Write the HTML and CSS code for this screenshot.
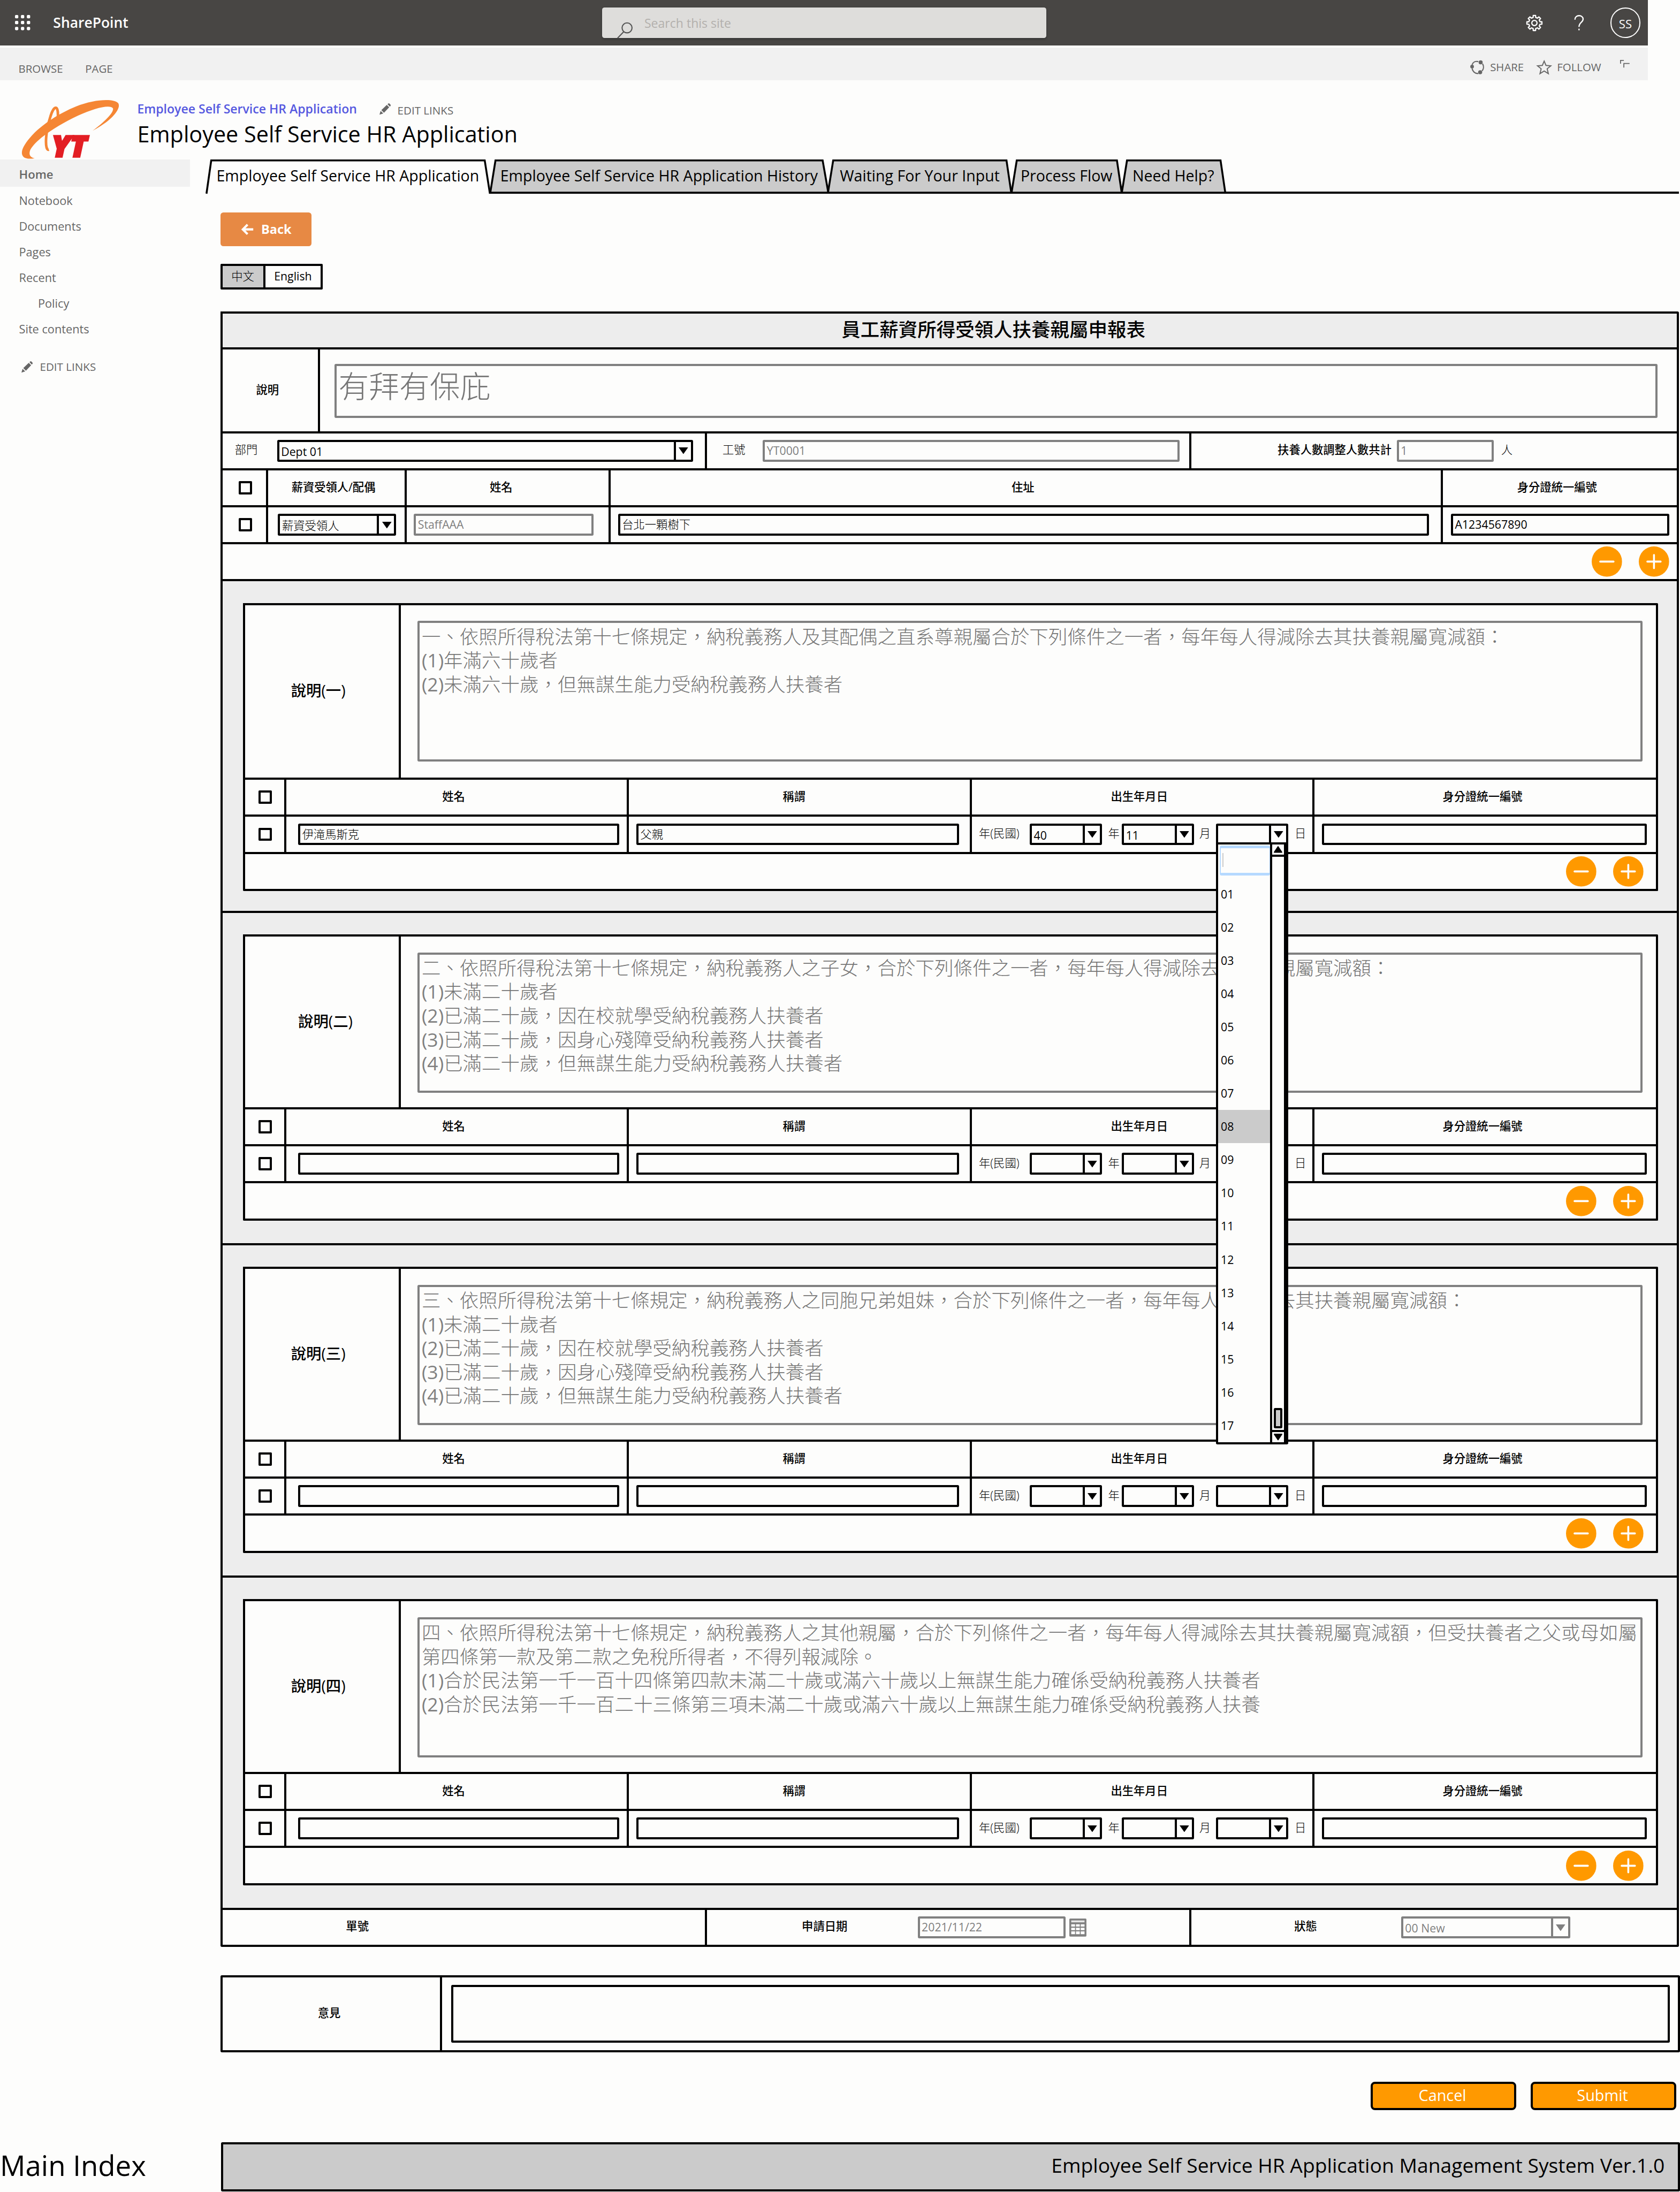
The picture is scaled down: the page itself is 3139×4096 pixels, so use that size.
FILE: index.html
```html
<!DOCTYPE html>
<html lang="zh-Hant">
<head>
<meta charset="utf-8">
<title>Employee Self Service HR Application</title>
<link rel="stylesheet" href="styles.css">
</head>
<body>
<svg class="defs" width="0" height="0">
  <defs>
    <symbol id="pencil" viewBox="0 0 24 24"><path d="M0 24 L2.5 16 L8 21.5Z M4 14.5 L15.5 3.5 L20.5 8.5 L9.5 20Z M17 2 L19 0.3 Q20 -0.2 21 0.6 L23.4 3 Q24.2 4 23.5 5 L22 7Z" fill="#666"/></symbol>
    <symbol id="down" viewBox="0 0 20 14"><path d="M0 0H20L10 14Z" fill="currentColor"/></symbol>
    <symbol id="minus" viewBox="0 0 64 64"><circle cx="32" cy="32" r="32" fill="#ff9900"/><path d="M18 32H46" stroke="#fff" stroke-width="4" stroke-linecap="round"/></symbol>
    <symbol id="plus" viewBox="0 0 64 64"><circle cx="32" cy="32" r="32" fill="#ff9900"/><path d="M18 32H46M32 18V46" stroke="#fff" stroke-width="4" stroke-linecap="round"/></symbol>
  </defs>
</svg>
<div class="page">
  <header class="topbar">
    <svg class="waffle" viewBox="0 0 32 32" fill="#fff"><rect x="0" y="0" width="7" height="7" rx="2"/><rect x="12.5" y="0" width="7" height="7" rx="2"/><rect x="25" y="0" width="7" height="7" rx="2"/><rect x="0" y="12.5" width="7" height="7" rx="2"/><rect x="12.5" y="12.5" width="7" height="7" rx="2"/><rect x="25" y="12.5" width="7" height="7" rx="2"/><rect x="0" y="25" width="7" height="7" rx="2"/><rect x="12.5" y="25" width="7" height="7" rx="2"/><rect x="25" y="25" width="7" height="7" rx="2"/></svg>
    <span class="brand">SharePoint</span>
    <div class="search">
      <svg class="lens" viewBox="0 0 34 34" fill="none" stroke="#555" stroke-width="2.4"><circle cx="21" cy="12.500" r="10.500"/><path d="M14 20.500 L1 34"/></svg>
      <span>Search this site</span>
    </div>
    <svg class="gear" viewBox="-18 -18 36 36" fill="none" stroke="#fff" stroke-width="2.6" stroke-linejoin="round"><path d="M15.800 -2.500L15.800 2.500L11.700 2.700L10.200 6.400L12.900 9.400L9.400 12.900L6.400 10.200L2.700 11.700L2.500 15.800L-2.500 15.800L-2.700 11.700L-6.400 10.200L-9.400 12.900L-12.900 9.400L-10.200 6.400L-11.700 2.700L-15.800 2.500L-15.800 -2.500L-11.700 -2.700L-10.200 -6.400L-12.900 -9.400L-9.400 -12.900L-6.400 -10.200L-2.700 -11.700L-2.500 -15.800L2.500 -15.800L2.700 -11.700L6.400 -10.200L9.400 -12.900L12.900 -9.400L10.200 -6.400L11.700 -2.700Z"/><circle r="5.500"/></svg>
    <svg class="help" viewBox="0 0 22 34" fill="none" stroke="#fff" stroke-width="2.800"><path d="M2 10 C2 -1.500 20 -1.500 20 9 C20 16 11 16 11 26"/><path d="M11 30V33.500"/></svg>
    <span class="avatar">SS</span>
  </header>
  <div class="ribbon">
    <span>BROWSE</span><span class="second">PAGE</span>
    <div class="actions">
      <svg class="share" viewBox="0 0 31 31" fill="none" stroke="#666" stroke-width="2.500"><path d="M4 10 C6 5 11 2 17 3.500"/><path d="M26 8 C29 13 28.500 19 25 23"/><path d="M17 28.500 C10 29 5 24 4 18"/><circle cx="4" cy="14" r="2.600" fill="#666"/><circle cx="22" cy="5" r="3" fill="#666"/><circle cx="21" cy="26" r="3" fill="#666"/></svg>
      <span class="act">SHARE</span>
      <svg class="star" viewBox="0 0 32 31" fill="none" stroke="#666" stroke-width="2.200"><path d="M16 2.500 L19.800 11.500 L30 12.300 L22.300 18.700 L24.800 28.800 L16 23.300 L7.200 28.800 L9.700 18.700 L2 12.300 L12.200 11.500Z"/></svg>
      <span class="act">FOLLOW</span>
      <svg class="focus" viewBox="0 0 20 17" fill="none" stroke="#666" stroke-width="2"><path d="M1 8V1H8"/><path d="M8 16V7.500H20"/></svg>
    </div>
  </div>
  <div class="site-head">
    <svg class="logo" viewBox="44 206 210 130">
      <path d="M73 333C46 338 40 324 52 305C72 272 118 241 160 224C200 208 240 207 249 217C256 228 236 254 195 275C222 255 240 236 238 228C232 219 200 227 165 243C120 264 76 293 64 315C60 325 63 331 73 333Z" fill="#f58634"/>
      <path d="M103 315C94 318 95 280 106 246C113 222 123 219 122 245C121 252 119 258 115 264" fill="none" stroke="#f58634" stroke-width="5.500"/>
      <text x="109" y="330" font-family="Open Sans, sans-serif" font-weight="800" font-style="italic" font-size="62" textLength="74" lengthAdjust="spacingAndGlyphs" fill="#e31e24" stroke="#e31e24" stroke-width="4">YT</text>
    </svg>
    <div class="titles">
      <div class="crumb"><span class="link">Employee Self Service HR Application</span><svg class="pen"><use href="#pencil"/></svg><span class="edit">EDIT LINKS</span></div>
      <h1>Employee Self Service HR Application</h1>
    </div>
  </div>
  <div class="main">
    <nav>
      <span class="home">Home</span>
      <span>Notebook</span>
      <span>Documents</span>
      <span>Pages</span>
      <span>Recent</span>
      <span class="sub">Policy</span>
      <span>Site contents</span>
      <span class="nav-edit"><svg class="pen"><use href="#pencil"/></svg>EDIT LINKS</span>
    </nav>
    <div class="content">
      <div class="tabs">
        <div class="tab t1"><svg viewBox="0 0 599 72"><path d="M2 72L12 2H588L599 72" fill="none"/></svg>Employee Self Service HR Application</div>
        <div class="tab t2"><svg viewBox="0 0 712 72"><path d="M0 70L11 2H700L712 70Z"/></svg>Employee Self Service HR Application History</div>
        <div class="tab t3"><svg viewBox="0 0 386 72"><path d="M0 70L11 2H376L386 70Z"/></svg>Waiting For Your Input</div>
        <div class="tab t4"><svg viewBox="0 0 232 72"><path d="M0 70L11 2H222L232 70Z"/></svg>Process Flow</div>
        <div class="tab t5"><svg viewBox="0 0 218 72"><path d="M0 70L11 2H208L218 70Z"/></svg>Need Help?</div>
        <div class="tab-rest"></div>
      </div>
      <div class="body">
        <div class="back"><svg viewBox="0 0 26 24" fill="none" stroke="#fff" stroke-width="4.600"><path d="M25 12H4M13 2L3 12L13 22"/></svg>Back</div>
        <div class="lang"><span class="on">中文</span><span>English</span></div>

        <div class="sheet">
          <div class="row title-row"><div class="cell title">員工薪資所得受領人扶養親屬申報表</div></div>
          <div class="row intro">
            <div class="cell th">說明</div>
            <div class="cell"><div class="area big">有拜有保庇</div></div>
          </div>
          <div class="row staff">
            <div class="cell"><span class="lb">部門</span><div class="select dept"><span>Dept 01</span><i><svg><use href="#down"/></svg></i></div></div>
            <div class="cell"><span class="lb">工號</span><div class="input off empno">YT0001</div></div>
            <div class="cell"><span class="lb strong">扶養人數調整人數共計</span><div class="input off count">1</div><span class="lb">人</span></div>
          </div>
          <div class="row who">
            <div class="cell ck"><b></b></div><div class="cell th">薪資受領人/配偶</div><div class="cell th name">姓名</div><div class="cell th">住址</div><div class="cell th">身分證統一編號</div>
          </div>
          <div class="row who">
            <div class="cell ck"><b></b></div>
            <div class="cell"><div class="select role"><span>薪資受領人</span><i><svg><use href="#down"/></svg></i></div></div>
            <div class="cell"><div class="input off staffname">StaffAAA</div></div>
            <div class="cell"><div class="input addr">台北一顆樹下</div></div>
            <div class="cell"><div class="input pid">A1234567890</div></div>
          </div>
          <div class="row add"><div class="cell"><svg><use href="#minus"/></svg><svg><use href="#plus"/></svg></div></div>

          <section class="first">
            <div class="box">
              <div class="row note"><div class="cell th">說明(一)</div><div class="cell"><div class="area">一、依照所得稅法第十七條規定，納稅義務人及其配偶之直系尊親屬合於下列條件之一者，每年每人得減除去其扶養親屬寬減額：<br><em>(1)</em>年滿六十歲者<br><em>(2)</em>未滿六十歲，但無謀生能力受納稅義務人扶養者</div></div></div>
              <div class="row kin"><div class="cell ck"><b></b></div><div class="cell th">姓名</div><div class="cell th rel">稱謂</div><div class="cell th">出生年月日</div><div class="cell th">身分證統一編號</div></div>
              <div class="row kin">
                <div class="cell ck"><b></b></div>
                <div class="cell"><div class="input kname">伊滝馬斯克</div></div>
                <div class="cell"><div class="input krel">父親</div></div>
                <div class="cell dob"><span class="y">年(民國)</span><div class="select"><span>40</span><i><svg><use href="#down"/></svg></i></div><span class="m">年</span><div class="select"><span>11</span><i><svg><use href="#down"/></svg></i></div><span class="d">月</span>
                  <div class="select open"><span></span><i><svg><use href="#down"/></svg></i>
                    <div class="menu">
                      <div class="options">
                        <div class="filter"></div>
                        <span>01</span><span>02</span><span>03</span><span>04</span><span>05</span><span>06</span><span>07</span><span class="hot">08</span><span>09</span><span>10</span><span>11</span><span>12</span><span>13</span><span>14</span><span>15</span><span>16</span><span>17</span>
                      </div>
                      <div class="scroll">
                        <div class="sb up"><svg viewBox="0 0 18 14"><path d="M9 1L17 13H1Z" stroke="#000" stroke-width="2" stroke-linejoin="round"/></svg></div>
                        <div class="thumb"></div>
                        <div class="sb dn"><svg viewBox="0 0 18 14"><path d="M1 1H17L9 13Z" stroke="#000" stroke-width="2" stroke-linejoin="round"/></svg></div>
                      </div>
                    </div>
                  </div><span class="e">日</span></div>
                <div class="cell"><div class="input kid"></div></div>
              </div>
              <div class="row add"><div class="cell"><svg><use href="#minus"/></svg><svg><use href="#plus"/></svg></div></div>
            </div>
          </section>

          <section>
            <div class="box">
              <div class="row note"><div class="cell th nudge">說明(二)</div><div class="cell"><div class="area">二、依照所得稅法第十七條規定，納稅義務人之子女，合於下列條件之一者，每年每人得減除去其扶養親屬寬減額：<br><em>(1)</em>未滿二十歲者<br><em>(2)</em>已滿二十歲，因在校就學受納稅義務人扶養者<br><em>(3)</em>已滿二十歲，因身心殘障受納稅義務人扶養者<br><em>(4)</em>已滿二十歲，但無謀生能力受納稅義務人扶養者</div></div></div>
              <div class="row kin"><div class="cell ck"><b></b></div><div class="cell th">姓名</div><div class="cell th rel">稱謂</div><div class="cell th">出生年月日</div><div class="cell th">身分證統一編號</div></div>
              <div class="row kin">
                <div class="cell ck"><b></b></div>
                <div class="cell"><div class="input kname"></div></div>
                <div class="cell"><div class="input krel"></div></div>
                <div class="cell dob"><span class="y">年(民國)</span><div class="select"><span></span><i><svg><use href="#down"/></svg></i></div><span class="m">年</span><div class="select"><span></span><i><svg><use href="#down"/></svg></i></div><span class="d">月</span><div class="select"><span></span><i><svg><use href="#down"/></svg></i></div><span class="e">日</span></div>
                <div class="cell"><div class="input kid"></div></div>
              </div>
              <div class="row add"><div class="cell"><svg><use href="#minus"/></svg><svg><use href="#plus"/></svg></div></div>
            </div>
          </section>

          <section>
            <div class="box">
              <div class="row note"><div class="cell th">說明(三)</div><div class="cell"><div class="area">三、依照所得稅法第十七條規定，納稅義務人之同胞兄弟姐妹，合於下列條件之一者，每年每人得減除去其扶養親屬寬減額：<br><em>(1)</em>未滿二十歲者<br><em>(2)</em>已滿二十歲，因在校就學受納稅義務人扶養者<br><em>(3)</em>已滿二十歲，因身心殘障受納稅義務人扶養者<br><em>(4)</em>已滿二十歲，但無謀生能力受納稅義務人扶養者</div></div></div>
              <div class="row kin"><div class="cell ck"><b></b></div><div class="cell th">姓名</div><div class="cell th rel">稱謂</div><div class="cell th">出生年月日</div><div class="cell th">身分證統一編號</div></div>
              <div class="row kin">
                <div class="cell ck"><b></b></div>
                <div class="cell"><div class="input kname"></div></div>
                <div class="cell"><div class="input krel"></div></div>
                <div class="cell dob"><span class="y">年(民國)</span><div class="select"><span></span><i><svg><use href="#down"/></svg></i></div><span class="m">年</span><div class="select"><span></span><i><svg><use href="#down"/></svg></i></div><span class="d">月</span><div class="select"><span></span><i><svg><use href="#down"/></svg></i></div><span class="e">日</span></div>
                <div class="cell"><div class="input kid"></div></div>
              </div>
              <div class="row add"><div class="cell"><svg><use href="#minus"/></svg><svg><use href="#plus"/></svg></div></div>
            </div>
          </section>

          <section>
            <div class="box">
              <div class="row note"><div class="cell th">說明(四)</div><div class="cell"><div class="area">四、依照所得稅法第十七條規定，納稅義務人之其他親屬，合於下列條件之一者，每年每人得減除去其扶養親屬寬減額，但受扶養者之父或母如屬<br>第四條第一款及第二款之免稅所得者，不得列報減除。<br><em>(1)</em>合於民法第一千一百十四條第四款未滿二十歲或滿六十歲以上無謀生能力確係受納稅義務人扶養者<br><em>(2)</em>合於民法第一千一百二十三條第三項未滿二十歲或滿六十歲以上無謀生能力確係受納稅義務人扶養</div></div></div>
              <div class="row kin"><div class="cell ck"><b></b></div><div class="cell th">姓名</div><div class="cell th rel">稱謂</div><div class="cell th">出生年月日</div><div class="cell th">身分證統一編號</div></div>
              <div class="row kin">
                <div class="cell ck"><b></b></div>
                <div class="cell"><div class="input kname"></div></div>
                <div class="cell"><div class="input krel"></div></div>
                <div class="cell dob"><span class="y">年(民國)</span><div class="select"><span></span><i><svg><use href="#down"/></svg></i></div><span class="m">年</span><div class="select"><span></span><i><svg><use href="#down"/></svg></i></div><span class="d">月</span><div class="select"><span></span><i><svg><use href="#down"/></svg></i></div><span class="e">日</span></div>
                <div class="cell"><div class="input kid"></div></div>
              </div>
              <div class="row add"><div class="cell"><svg><use href="#minus"/></svg><svg><use href="#plus"/></svg></div></div>
            </div>
          </section>

          <div class="row status">
            <div class="cell"><span class="lb strong">單號</span></div>
            <div class="cell"><span class="lb strong">申請日期</span><div class="input off date">2021/11/22</div><svg class="cal" viewBox="0 0 36 38"><rect width="36" height="38" rx="2" fill="#808080"/><path d="M4 4H32V8H4Z" fill="#e6e6e6"/><path d="M4 12h8v5H4zM14 12h8v5h-8zM24 12h8v5h-8zM4 19.500h8v5H4zM14 19.500h8v5h-8zM24 19.500h8v5h-8zM4 27h8v6H4zM14 27h8v6h-8zM24 27h8v6h-8z" fill="#fff"/></svg></div>
            <div class="cell"><span class="lb strong">狀態</span><div class="select off state"><span>00 New</span><i><svg><use href="#down"/></svg></i></div></div>
          </div>
        </div>

        <div class="comment"><div class="label">意見</div><div class="field"></div></div>
        <div class="buttons"><span>Cancel</span><span>Submit</span></div>
      </div>
    </div>
  </div>
  <footer><div class="index">Main Index</div><div class="ver">Employee Self Service HR Application Management System Ver.1.0</div></footer>
</div>
</body>
</html>
```
FILE: styles.css
```css
* { box-sizing: border-box; }
html, body { margin: 0; background: #fdfdfc; overflow: hidden; }
.defs { position: absolute; }
.page {
  --line: 4.52px;
  zoom: 0.88725;
  width: 3538px;
  height: 4616px;
  font-family: "Open Sans", "Noto Sans CJK TC", sans-serif;
  font-size: 24px;
  line-height: 1.3;
  color: #000;
  white-space: nowrap;
  text-spacing-trim: space-all;
}
svg { display: block; flex: none; overflow: visible; }

/* Suite bar */
.topbar { width: 3470px; height: 96px; background: #484644; display: flex; align-items: center; color: #fff; }
.waffle { width: 32px; height: 32px; margin-left: 31px; }
.brand { width: 1156px; margin-left: 49px; font-size: 29.8px; font-weight: 600; }
.search { width: 936px; height: 64px; background: #dedddb; border-radius: 5px; display: flex; align-items: center; color: #b3b0ad; font-size: 26px; box-shadow: 0 2px 4px #333; }
.lens { width: 34px; height: 34px; margin: 30px 20px 0 32px; }
.search span { padding: 3px 0 0 3px; }
.gear { width: 36px; height: 36px; margin-left: 1009px; }
.help { width: 21px; height: 33px; margin-left: 66px; }
.avatar { width: 64px; height: 64px; margin-left: 55px; border: 2.3px solid #fff; border-radius: 50%; text-align: center; line-height: 64px; font-size: 25px; }

/* Ribbon */
.ribbon { width: 3470px; height: 69px; margin-top: 4px; background: #f1f1f1; display: flex; align-items: center; padding-left: 39px; color: #666; font-size: 23px; }
.ribbon > span { padding-top: 21px; }
.second { margin-left: 47px; }
.actions { margin-left: auto; display: flex; align-items: center; width: 374px; padding-top: 14px; }
.share { width: 31px; height: 31px; }
.actions .act { margin-left: 11px; }
.star { width: 32px; height: 31px; margin-left: 27px; }
.focus { width: 20px; height: 17px; margin: -14px 0 0 40px; }

/* Site heading */
.site-head { height: 167px; display: flex; }
.logo { width: 210px; height: 130px; margin: 37px 0 0 44px; }
.titles { margin-left: 35px; padding-top: 41px; }
.crumb { display: flex; align-items: center; height: 40px; }
.link { width: 510px; color: #5558e0; font-weight: 600; font-size: 26px; }
.pen { width: 24px; height: 24px; }
.edit { margin-left: 14px; padding-top: 6px; font-size: 23.2px; color: #666; }
h1 { margin: 1px 0 0; font-size: 46.6px; font-weight: 400; line-height: 62px; }

/* Layout */
.main { display: grid; grid-template-columns: 400px 1fr; }
nav { display: flex; flex-direction: column; color: #666; font-size: 24.5px; line-height: 54px; }
nav span { padding-left: 40px; }
nav .home { height: 57px; line-height: 62px; background: #f1f1f1; font-weight: 600; margin-bottom: 3px; font-size: 25px; }
nav .sub { padding-left: 80px; }
nav .nav-edit { margin-top: 26px; padding-left: 45px; display: flex; align-items: center; gap: 15px; font-size: 23.2px; }

.tabs { display: flex; height: 72px; margin-left: 33px; width: 3103px; }
.tab { position: relative; z-index: 0; text-align: center; font-size: 32.200px; line-height: 68px; }
.tab svg { position: absolute; inset: 0; width: 100%; height: 100%; z-index: -1; fill: #cbcbcb; stroke: #000; stroke-width: 4; }
.t1 { width: 599px; } .t2 { width: 712px; } .t3 { width: 386px; } .t4 { width: 232px; } .t5 { width: 218px; }
.tab-rest { flex: 1; border-bottom: var(--line) solid #000; }

.body { padding-left: 64px; }
.back { margin-top: 40px; width: 192px; height: 70px; border-radius: 6px; background: #e78944; color: #fff; font-weight: 700; font-size: 26.500px; display: flex; align-items: center; padding-left: 44px; gap: 16px; }
.back svg { width: 26px; height: 24px; }
.lang { display: flex; margin-top: 38px; width: 216px; height: 54px; border: var(--line) solid #000; line-height: 43px; text-align: center; border-radius: 2px; }
.lang span { flex: 1; }
.lang .on { flex: none; width: 90px; background: #cbcbcb; border-right: var(--line) solid #000; padding: 0; font-weight: 300; }

/* Form grid */
.sheet { margin-top: 46px; width: 3072px; border: solid #000; border-width: 0 var(--line) var(--line) 0; border-radius: 3px; }
.row { display: grid; height: 78px; }
.cell { border: solid #000; border-width: var(--line) 0 0 var(--line); display: flex; align-items: center; min-width: 0; }
.title-row { height: 76px; }
.title { background: #ededed; justify-content: center; font-size: 40px; font-weight: 500; padding: 0 0 6px 184px; }
.th { justify-content: center; font-weight: 500; padding: 0 12px 4px 0; }
.intro { height: 176px; grid-template-columns: 206px 1fr; }
.staff { grid-template-columns: 1020px 1020px 1fr; }
.who { grid-template-columns: 96px 292px 430px 1752px 1fr; }
.who .name { padding-right: 28px; }
.ck { padding-left: 34px; }
.ck b { width: 28px; height: 28px; border: var(--line) solid #000; border-radius: 2px; }
.lb { margin-top: -5px; font-weight: 300; }
.strong { font-weight: 500; }

.input, .select { height: 46px; border: var(--line) solid #000; border-radius: 3px; padding-left: 4px; line-height: 36px; flex: none; }
.select { display: flex; position: relative; line-height: 40px; }
.select > span { flex: 1; }
.select i { width: 36px; border-left: var(--line) solid #000; display: flex; align-items: center; justify-content: center; }
.select i svg { width: 20px; height: 14px; margin-top: 1px; }
.off { border-color: #808080; color: #808080; }
.off i { border-color: #808080; }
.dept { width: 876px; margin-left: 41px; }
.staff .cell:nth-child(1) { padding-left: 26px; }
.staff .cell:nth-child(2) { padding-left: 33px; }
.empno { width: 878px; margin-left: 37px; }
.staff .cell:nth-child(3) { padding-left: 182px; }
.count { width: 204px; margin: 0 16px 0 11px; }
.role { width: 249px; margin-left: 21px; }
.staffname { width: 378px; margin-left: 15px; }
.addr { width: 1708px; margin-left: 15px; }
.pid { width: 460px; margin-left: 17px; }
.role > span, .addr, .kname, .krel { font-weight: 300; }

.area { border: var(--line) solid #808080; border-radius: 3px; color: #767676; width: 2580px; height: 296px; margin-left: 35px; padding: 2.500px 0 0 4px; font-size: 40px; line-height: 50.2px; font-weight: 300; }
.area em { font-style: normal; font-weight: 400; color: #808080; }
.big { width: 2786px; height: 114px; margin: 2px 0 0 30px; font-size: 64px; line-height: 84px; padding-top: 0; }

.add .cell { justify-content: flex-end; gap: 36px; padding-right: 16px; }
.add svg { width: 64px; height: 64px; }

section { height: 700px; border: solid #000; border-width: var(--line) 0 0 var(--line); background: #ededed; padding: 45.500px 0 0 43.500px; }
section.first { height: 698px; }
.box { width: 2980px; border: solid #000; border-width: 0 var(--line) var(--line) 0; background: #fdfdfc; border-radius: 2px; }
.note { height: 364px; grid-template-columns: 328px 1fr; }
.first .note { height: 368px; }
.note > .th { font-size: 32px; padding: 0 16px 3px 0; }
.note > .nudge { padding: 0 0 3px 14px; }
.note > .cell:last-child { align-items: flex-start; padding-top: 33.500px; }
.kin { grid-template-columns: 86px 722px 722px 722px 1fr; }
.kin .ck { padding-left: 28px; }
.kin .rel { padding-right: 22px; }
.box .add .cell { padding-right: 26px; }
.kname { width: 676px; margin-left: 25.500px; }
.krel { width: 680px; margin-left: 15.500px; }
.kid { width: 684px; margin-left: 15.500px; }
.dob > span { margin-top: -5px; font-weight: 300; }
.dob .select { width: 152px; }
.dob .y { width: 122px; padding-left: 15px; }
.dob .m { width: 42px; padding-left: 13px; }
.dob .d { width: 46px; padding-left: 11px; }
.dob .e { padding-left: 14px; }

/* Day list laid over the form */
.menu { position: absolute; z-index: 5; left: -4.500px; top: 35.500px; width: 152px; height: 1268px; background: #fdfdfc; border: var(--line) solid #000; border-right-width: 9.1px; border-radius: 3px; display: flex; }
.options { width: 110px; display: flex; flex-direction: column; line-height: 70px; }
.options span { height: 70px; padding-left: 6px; flex: none; }
.options .hot { background: #cbcbcb; }
.filter { height: 64px; margin: 2px 0 3.500px 4px; border: solid #b5d9ff; border-width: 6px 2px 6px 3px; border-radius: 4px; padding: 10px 0 0 3px; }
.filter::before { content: ""; display: block; width: 2px; height: 30px; background: #ccc; }
.scroll { flex: 1; border-left: var(--line) solid #000; display: flex; flex-direction: column; align-items: center; }
.sb { width: 100%; display: flex; justify-content: center; align-items: center; }
.sb svg { width: 18px; height: 14px; }
.up { height: 26px; border-bottom: var(--line) solid #000; }
.dn { height: 26px; border-top: var(--line) solid #000; }
.thumb { width: 18px; height: 42px; margin: auto 0 4px; border: var(--line) solid #000; border-radius: 3px; background: #cbcbcb; }

.status { grid-template-columns: 1020px 1020px 1fr; height: 78px; }
.status .cell:nth-child(1) { padding-left: 260px; }
.status .cell:nth-child(2) { padding-left: 200px; }
.status .cell:nth-child(3) { padding-left: 217px; }
.date { width: 312px; margin: 0 8px 0 148px; }
.cal { width: 36px; height: 38px; }
.state { width: 356px; margin-left: 177px; }

.comment { margin-top: 59.500px; width: 3074px; height: 162px; border: var(--line) solid #000; border-radius: 3px; display: flex; align-items: center; }
.label { width: 462px; height: 100%; border-right: var(--line) solid #000; display: flex; align-items: center; justify-content: center; font-weight: 500; padding: 0 8px 4px 0; }
.field { width: 2566px; height: 122px; margin-left: 20px; border: var(--line) solid #000; border-radius: 3px; }
.buttons { display: flex; justify-content: flex-end; gap: 30px; margin-top: 62px; padding-right: 8px; }
.buttons span { width: 307px; height: 60px; border: var(--line) solid #000; border-radius: 9px; background: #ff9900; color: #fff; font-size: 32.500px; line-height: 48px; text-align: center; padding-right: 4px; }

footer { display: flex; margin-top: 68px; height: 104px; }
.index { width: 466px; font-size: 59.500px; line-height: 98px; }
.ver { flex: 1; background: #cbcbcb; border: var(--line) solid #000; border-radius: 3px; text-align: right; padding-right: 28px; font-size: 42px; line-height: 89px; }
```
